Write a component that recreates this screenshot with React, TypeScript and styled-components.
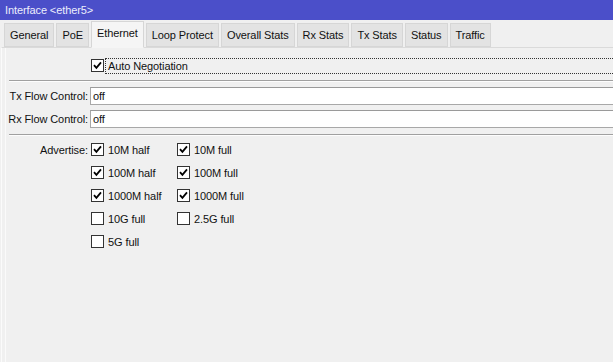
import React from 'react';
import styled, { createGlobalStyle } from 'styled-components';

const GlobalStyle = createGlobalStyle`
  html, body {
    margin: 0;
    padding: 0;
    width: 613px;
    height: 362px;
    overflow: hidden;
    background: #f0f0f0;
  }
  body {
    font-family: "Liberation Sans", Arial, sans-serif;
    font-size: 11px;
    letter-spacing: -0.1px;
    color: #111;
  }
`;

const Window = styled.div`
  width: 613px;
  height: 362px;
  display: flex;
  flex-direction: column;
  background: #f0f0f0;
  overflow: hidden;
`;

const TitleBar = styled.div`
  height: 20px;
  flex: 0 0 20px;
  background: #4b4fc9;
  color: #eceefc;
  font-size: 11px;
  line-height: 20px;
  padding-left: 5px;
  white-space: nowrap;
`;

const TabStrip = styled.div`
  height: 27px;
  flex: 0 0 27px;
  display: flex;
  align-items: flex-end;
  padding-left: 4px;
  gap: 2px;
  position: relative;
  z-index: 1;
`;

const Tab = styled.div<{ active?: boolean }>`
  height: ${({ active }) => (active ? '27px' : '24px')};
  margin-bottom: ${({ active }) => (active ? '-1px' : '0')};
  padding: 0 5px;
  box-sizing: border-box;
  display: flex;
  align-items: ${({ active }) => (active ? 'flex-start' : 'center')};
  padding-top: ${({ active }) => (active ? '5px' : '0')};
  background: ${({ active }) => (active ? '#f5f5f5' : '#e3e3e3')};
  border: 1px solid #d6d6d6;
  border-bottom: ${({ active }) => (active ? '1px solid #f5f5f5' : '1px solid #d6d6d6')};
  white-space: nowrap;
`;

const Panel = styled.div`
  flex: 1;
  border-top: 1px solid #dadada;
  border-left: 1px solid #fbfbfb;
  margin-left: 1px;
  box-shadow: inset 3px 0 0 #f0f0f0, inset 4px 0 0 #fafafa;
  display: flex;
  flex-direction: column;
  padding-top: 9px;
`;

const AutoRow = styled.div`
  display: flex;
  align-items: center;
  height: 17px;
  padding-left: 89px;
`;

const FocusLabel = styled.div`
  margin-left: 1px;
  flex: 0 0 600px;
  height: 16px;
  line-height: 14px;
  padding-left: 2px;
  border: 1px dotted #333;
  box-sizing: border-box;
  white-space: nowrap;
`;

const Divider = styled.div<{ top: number; bottom: number }>`
  margin: ${({ top, bottom }) => `${top}px 0 ${bottom}px 7px`};
  height: 0;
  border-top: 1px solid #a0a0a0;
  border-bottom: 1px solid #fdfdfd;
`;

const FieldRow = styled.div`
  display: flex;
  align-items: center;
  height: 18px;
  & + & {
    margin-top: 5px;
  }
`;

const FieldLabel = styled.div`
  width: 87px;
  flex: 0 0 87px;
  text-align: right;
  padding-right: 1px;
  box-sizing: border-box;
  white-space: nowrap;
`;

const Input = styled.div`
  flex: 0 0 540px;
  height: 18px;
  margin-left: 1px;
  box-sizing: border-box;
  background: #fff;
  border: 1px solid #a8a8a8;
  border-top-color: #9a9a9a;
  padding-left: 2px;
  line-height: 16px;
`;

const AdvertiseGrid = styled.div`
  display: grid;
  grid-template-columns: 88px 86px 90px;
  grid-auto-rows: 23px;
  margin-top: 2px;
  align-items: center;
`;

const GridLabel = styled.div`
  text-align: right;
  padding-right: 2px;
`;

const Check = styled.label`
  display: flex;
  align-items: center;
  gap: 4px;
  padding-left: 1px;
  white-space: nowrap;
`;

const Box = styled.span`
  width: 13px;
  height: 13px;
  flex: 0 0 13px;
  box-sizing: border-box;
  background: #fff;
  border: 1px solid #333;
  display: flex;
  align-items: center;
  justify-content: center;
`;

const CheckBox = ({ checked }: { checked?: boolean }) => (
  <Box>
    {checked && (
      <svg width="9" height="9" viewBox="0 0 9 9">
        <path d="M1 4.2 L3.4 6.8 L8 1.4" fill="none" stroke="#000" strokeWidth="1.8" />
      </svg>
    )}
  </Box>
);

const tabs = ['General', 'PoE', 'Ethernet', 'Loop Protect', 'Overall Stats', 'Rx Stats', 'Tx Stats', 'Status', 'Traffic'];

const advertise: [string, boolean][][] = [
  [['10M half', true], ['10M full', true]],
  [['100M half', true], ['100M full', true]],
  [['1000M half', true], ['1000M full', true]],
  [['10G full', false], ['2.5G full', false]],
  [['5G full', false]],
];

const App: React.FC = () => (
  <>
    <GlobalStyle />
    <Window>
      <TitleBar>Interface &lt;ether5&gt;</TitleBar>
      <TabStrip>
        {tabs.map((t) => (
          <Tab key={t} active={t === 'Ethernet'}>{t}</Tab>
        ))}
      </TabStrip>
      <Panel>
        <AutoRow>
          <CheckBox checked />
          <FocusLabel>Auto Negotiation</FocusLabel>
        </AutoRow>
        <Divider top={6} bottom={5} />
        <FieldRow>
          <FieldLabel>Tx Flow Control:</FieldLabel>
          <Input>off</Input>
        </FieldRow>
        <FieldRow>
          <FieldLabel>Rx Flow Control:</FieldLabel>
          <Input>off</Input>
        </FieldRow>
        <Divider top={6} bottom={0} />
        <AdvertiseGrid>
          {advertise.map((row, i) => (
            <React.Fragment key={i}>
              <GridLabel>{i === 0 ? 'Advertise:' : ''}</GridLabel>
              {row.map(([name, on]) => (
                <Check key={name}>
                  <CheckBox checked={on} />
                  {name}
                </Check>
              ))}
              {row.length < 2 && <span />}
            </React.Fragment>
          ))}
        </AdvertiseGrid>
      </Panel>
    </Window>
  </>
);

export default App;
